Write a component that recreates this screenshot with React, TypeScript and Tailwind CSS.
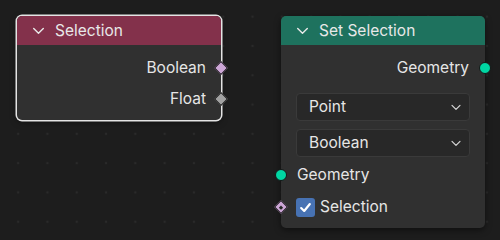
import React from 'react';

// --- Sockets ---

const CircleSocket: React.FC<{ side: 'left' | 'right' }> = ({ side }) => (
  <span
    className={`absolute top-1/2 -translate-y-1/2 w-[12px] h-[12px] rounded-full bg-[#00d6a3] border border-[#161616] ${
      side === 'left' ? 'left-[-6px]' : 'right-[-6px]'
    }`}
  />
);

const DiamondSocket: React.FC<{ side: 'left' | 'right'; color: string; dot?: boolean }> = ({ side, color, dot }) => (
  <span
    className={`absolute top-1/2 w-[10px] h-[10px] -translate-y-1/2 rotate-45 border border-[#161616] flex items-center justify-center ${color} ${
      side === 'left' ? 'left-[-5px]' : 'right-[-5px]'
    }`}
  >
    {dot && <span className="w-[3px] h-[3px] bg-[#262626]" />}
  </span>
);

const Chevron: React.FC<{ className?: string }> = ({ className }) => (
  <svg viewBox="0 0 12 8" className={className} fill="none" stroke="currentColor" strokeWidth="1.4" strokeLinecap="round" strokeLinejoin="round">
    <path d="M1.2 1.5 6 6.3 10.8 1.5" />
  </svg>
);

// --- Node parts ---

const NodeHeader: React.FC<{ title: string; color: string }> = ({ title, color }) => (
  <div className={`h-[29px] flex items-center pl-[15px] gap-[10px] text-[#e8e8e8] rounded-t-[5px] ${color}`}>
    <Chevron className="w-[13px] h-[8px]" />
    <span className="text-[15.5px] leading-none">{title}</span>
  </div>
);

const Dropdown: React.FC<{ value: string }> = ({ value }) => (
  <div className="mx-[15px] h-[28px] rounded-[4px] bg-[#282828] border border-[#3a3a3a] flex items-center justify-between pl-[12px] pr-[8px] text-[#e6e6e6] text-[15.5px]">
    <span>{value}</span>
    <Chevron className="w-[10px] h-[7px] text-[#d8d8d8]" />
  </div>
);

export default function App() {
  return (
    <div
      className="relative w-[500px] h-[240px] overflow-hidden bg-[#1d1d1d] bg-[radial-gradient(circle,#2a2a2a_1px,transparent_1.6px)] bg-[length:29.3px_29.3px] bg-[position:3.5px_2px]"
      style={{ fontFamily: 'Inter, "Noto Sans", sans-serif' }}
    >
      {/* Selection node (active, outlined) */}
      <div className="absolute left-[17px] top-[16px] w-[204px] h-[104px] rounded-[5px] bg-[#303030] ring-[1.5px] ring-[#e4e4e4] shadow-[0_2px_6px_rgba(0,0,0,0.5)]">
        <NodeHeader title="Selection" color="bg-[#83314b]" />
        <div className="flex flex-col gap-[9px] pt-[12px] text-[15.5px] text-[#e6e6e6]">
          <div className="relative h-[22px] flex items-center justify-end pr-[15px]">
            Boolean
            <DiamondSocket side="right" color="bg-[#cca6d6]" />
          </div>
          <div className="relative h-[22px] flex items-center justify-end pr-[15px]">
            Float
            <DiamondSocket side="right" color="bg-[#a1a1a1]" />
          </div>
        </div>
      </div>

      {/* Set Selection node */}
      <div className="absolute left-[281px] top-[16px] w-[204px] h-[212px] rounded-[5px] bg-[#303030] shadow-[0_2px_6px_rgba(0,0,0,0.5)]">
        <NodeHeader title="Set Selection" color="bg-[#1e725e]" />
        <div className="flex flex-col pt-[12px] text-[15.5px] text-[#e6e6e6]">
          <div className="relative h-[22px] flex items-center justify-end pr-[16px]">
            Geometry
            <CircleSocket side="right" />
          </div>
          <div className="mt-[14px] flex flex-col gap-[8px]">
            <Dropdown value="Point" />
            <Dropdown value="Boolean" />
          </div>
          <div className="relative mt-[7px] h-[22px] flex items-center pl-[16px]">
            <CircleSocket side="left" />
            Geometry
          </div>
          <div className="relative mt-[10px] h-[22px] flex items-center pl-[15px] gap-[5px]">
            <DiamondSocket side="left" color="bg-[#cca6d6]" dot />
            <span className="w-[19px] h-[19px] rounded-[3px] bg-[#4772b3] flex items-center justify-center">
              <svg viewBox="0 0 12 12" className="w-[13px] h-[13px]" fill="none" stroke="#ffffff" strokeWidth="2" strokeLinecap="round" strokeLinejoin="round">
                <path d="M2 6.5 4.8 9.2 10 2.8" />
              </svg>
            </span>
            Selection
          </div>
        </div>
      </div>
    </div>
  );
}
